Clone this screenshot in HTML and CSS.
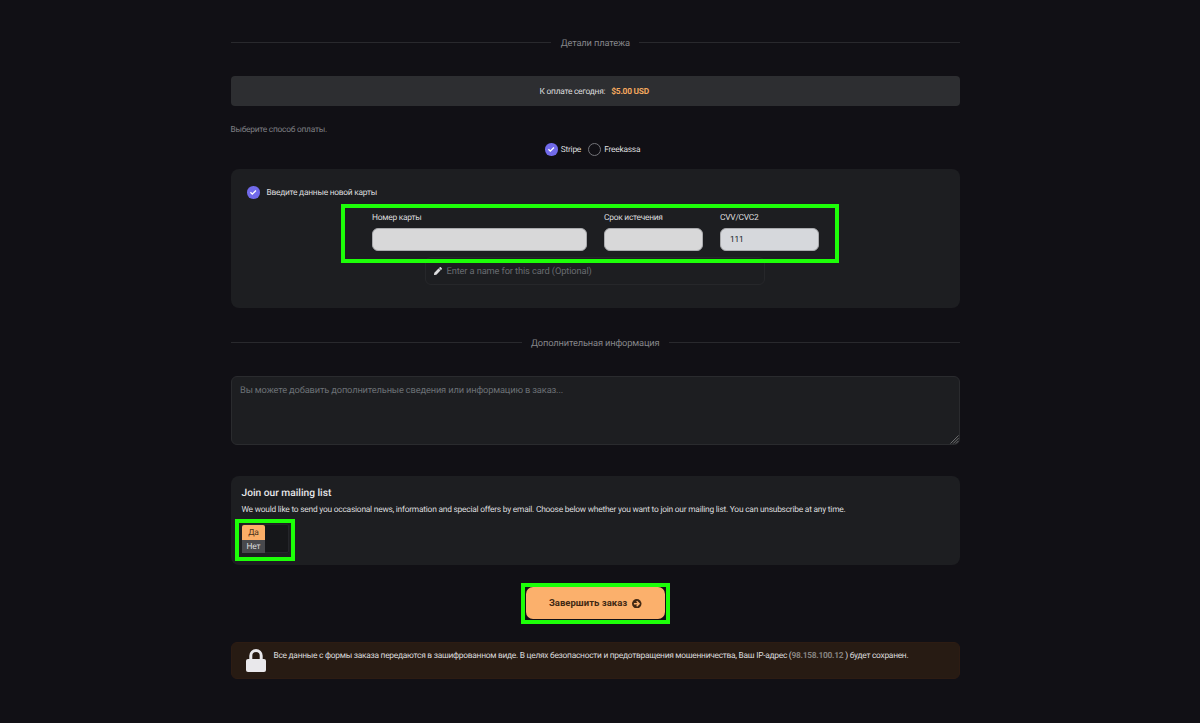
FILE: index.html
```
<!DOCTYPE html>
<html lang="ru">
<head>
<meta charset="utf-8">
<title>Оформление заказа</title>
<link rel="stylesheet" href="styles.css">
</head>
<body>
<main class="checkout">
  <div class="divider"><span class="divider-text">Детали платежа</span></div>

  <div class="total"><span class="total-label">К оплате сегодня:</span><strong class="total-price">$5.00 USD</strong></div>

  <p class="hint"><span class="hint-text">Выберите способ оплаты.</span></p>

  <div class="methods">
    <span class="radio radio-on"><svg viewBox="0 0 12 12"><path d="M3.3 6.1l1.8 1.7 3.5-3.5"/></svg></span>
    <span class="method-name stripe">Stripe</span>
    <span class="radio"></span>
    <span class="method-name freekassa">Freekassa</span>
  </div>

  <section class="card-panel">
    <div class="card-choice">
      <span class="radio radio-on"><svg viewBox="0 0 12 12"><path d="M3.3 6.1l1.8 1.7 3.5-3.5"/></svg></span>
      <span class="choice-text">Введите данные новой карты</span>
    </div>
    <div class="fields">
      <div class="field"><span class="field-label number-label">Номер карты</span><div class="field-box"></div></div>
      <div class="field"><span class="field-label expiry-label">Срок истечения</span><div class="field-box"></div></div>
      <div class="field"><span class="field-label cvv-label">CVV/CVC2</span><div class="field-box field-box-filled">111</div></div>
    </div>
    <div class="card-name">
      <svg class="pencil" viewBox="0 0 512 512"><path d="M498 142l-46 46c-5 5-13 5-17 0L324 77c-5-5-5-12 0-17l46-46c19-19 49-19 68 0l60 60c19 19 19 49 0 68zm-214-42L22 362 0 484c-3 16 12 30 28 28l122-22 262-262c5-5 5-13 0-17L301 100c-4-5-12-5-17 0z"/></svg>
      <span class="card-name-text">Enter a name for this card (Optional)</span>
    </div>
    <div class="mark mark-card"></div>
  </section>

  <div class="divider divider-info"><span class="divider-text info-text">Дополнительная информация</span></div>

  <div class="notes">
    <span class="notes-text">Вы можете добавить дополнительные сведения или информацию в заказ...</span>
    <svg class="grip" viewBox="0 0 10 10"><path d="M0.5 9.5l9-9M3.5 9.5l6-6M6.5 9.5l3-3"/></svg>
  </div>

  <section class="mailing">
    <h2 class="mailing-title"><span class="mailing-title-text">Join our mailing list</span></h2>
    <p class="mailing-copy"><span class="mailing-copy-text">We would like to send you occasional news, information and special offers by email. Choose below whether you want to join our mailing list. You can unsubscribe at any time.</span></p>
    <div class="switch">
      <span class="switch-yes">Да</span>
      <span class="switch-no">Нет</span>
    </div>
    <div class="mark mark-switch"></div>
  </section>

  <div class="submit-row">
    <div class="submit-frame">
      <button class="submit" type="button"><span class="submit-text">Завершить заказ</span><svg class="arrow" viewBox="0 0 10 10"><circle cx="5" cy="5" r="5"/><path d="M2 5h5.4M4.9 2.3L7.6 5 4.9 7.7"/></svg></button>
    </div>
  </div>

  <div class="secure">
    <svg class="lock" viewBox="0 0 20 23"><path class="shackle" d="M4.8 11V6.8a5.2 5.2 0 0 1 10.4 0V11"/><rect y="10" width="20" height="13" rx="2"/></svg>
    <span class="secure-text">Все данные с формы заказа передаются в зашифрованном виде. В целях безопасности и предотвращения мошенничества, Ваш IP-адрес (<strong>98.158.100.12</strong> ) будет сохранен.</span>
  </div>
</main>
</body>
</html>
```
FILE: styles.css
```
* { box-sizing: border-box; }
body {
  margin: 0;
  height: 723px;
  overflow: hidden;
  background: #111015;
  color: #dcdcde;
  font: 8.4px/12px Roboto, "Liberation Sans", sans-serif;
  letter-spacing: -0.245px;
  text-rendering: geometricPrecision;
}
p, h2 { margin: 0; }
span, strong { white-space: nowrap; }
svg { display: block; flex: none; }
.checkout {
  width: 729.5px;
  margin-left: 230.5px;
  padding-top: 36px;
}
.divider {
  display: flex;
  align-items: center;
  gap: 9.5px;
  height: 13px;
  color: #85868a;
  font-size: 9.3px;
  letter-spacing: -0.15px;
}
.divider::before, .divider::after {
  content: "";
  flex: 1;
  height: 1px;
  background: #29292d;
}
.divider-text { padding-top: 3px; }
.total {
  display: flex;
  align-items: center;
  justify-content: center;
  gap: 6px;
  height: 30px;
  margin-top: 27px;
  padding: 1px 2px 0 0;
  border-radius: 4px;
  background: #2d2e31;
}
.total-price { color: #f3a75e; }
.hint {
  margin-top: 17.5px;
  color: #7e7f83;
}
.methods {
  display: flex;
  align-items: center;
  height: 13px;
  margin-top: 7.5px;
  padding-left: 314.8px;
}
.radio {
  display: flex;
  flex: none;
  width: 13px;
  height: 13px;
  border: 1px solid #737378;
  border-radius: 50%;
}
.radio-on {
  width: 12.5px;
  height: 12.5px;
  border: 0;
  background: #716aea;
}
.radio svg {
  width: 100%;
  height: 100%;
  fill: none;
  stroke: #fff;
  stroke-width: 1.3;
}
.method-name { margin-left: 3px; }
.stripe { width: 20.5px; margin-right: 7px; }
.card-panel {
  position: relative;
  height: 139px;
  margin-top: 12.5px;
  padding-top: 17.5px;
  border-radius: 8px;
  background: #1d1e21;
}
.card-choice {
  display: flex;
  align-items: center;
  height: 13px;
  gap: 7px;
  padding-left: 16.5px;
}
.fields {
  display: grid;
  grid-template-columns: 215px 99px 98.5px;
  gap: 17px;
  margin: 12.5px 0 0 141.5px;
}
.field-label {
  display: block;
  width: max-content;
}
.field-box {
  height: 23px;
  margin-top: 4px;
  border: 1px solid #a9aaad;
  border-radius: 6px;
  background: #d8d8d9;
}
.field-box-filled {
  padding-left: 9px;
  background: #d6d8dc;
  color: #1c262c;
  line-height: 22px;
}
.card-name {
  display: flex;
  align-items: center;
  gap: 5px;
  width: 340px;
  height: 28px;
  margin: 6px 0 0 194.5px;
  padding-left: 7.5px;
  border: 1px solid #26272a;
  border-radius: 6px;
  color: #686b70;
  font-size: 9.3px;
  letter-spacing: -0.13px;
}
.card-name-text { padding-top: 3px; }
.pencil {
  width: 8px;
  height: 8px;
  fill: #dddddf;
}
.mark {
  position: absolute;
  border: 4px solid #1dff08;
}
.mark-card { left: 110.5px; top: 35.5px; width: 498px; height: 59px; }
.divider-info { margin-top: 28.5px; }
.divider-info::before, .divider-info::after { margin-top: -1px; }
.notes {
  position: relative;
  height: 68.5px;
  margin-top: 27px;
  padding: 8px 8.5px;
  border: 1px solid #2a2b2e;
  border-radius: 6px;
  background: #1d1e21;
  color: #6b7075;
  font-size: 9.3px;
  letter-spacing: -0.157px;
}
.grip {
  position: absolute;
  right: 0;
  bottom: 0;
  width: 9px;
  height: 9px;
  fill: none;
  stroke: #8b8b8d;
  stroke-width: 0.8;
}
.mailing {
  position: relative;
  height: 89.5px;
  margin-top: 31px;
  padding: 11px 11px;
  border-radius: 8px;
  background: #1d1e21;
}
.mailing-title {
  color: #e8e8ea;
  font-size: 10.2px;
  font-weight: 500;
  letter-spacing: 0;
  line-height: 14px;
}
.mailing-copy {
  margin-top: 3px;
  letter-spacing: -0.228px;
}
.switch {
  width: 47.5px;
  height: 29px;
  margin-top: 8.5px;
  border: 1px solid #24252a;
  border-radius: 2px;
  background: #16171a;
}
.switch span {
  display: block;
  width: 23px;
  height: 14px;
  margin-left: -0.5px;
  text-align: center;
  line-height: 16px;
  letter-spacing: -0.1px;
}
.switch .switch-yes {
  height: 15px;
  border-radius: 2px 2px 0 0;
  background: #fbae67;
  color: #49301b;
}
.switch .switch-no {
  height: 13px;
  line-height: 15px;
  background: #48494d;
}
.mark-switch { left: 4.5px; top: 43.5px; width: 60px; height: 42px; }
.submit-row {
  display: flex;
  justify-content: center;
  margin-top: 18px;
}
.submit-frame {
  width: 149px;
  height: 41px;
  border: 4px solid #1dff08;
}
.submit {
  display: flex;
  align-items: center;
  justify-content: center;
  gap: 5px;
  width: 139.5px;
  height: 32px;
  margin: 0.3px 0 0 0.8px;
  padding: 0;
  border: 0;
  border-radius: 7px;
  background: #fbb06c;
  color: #412813;
  font: 700 9.5px/12px Roboto, "Liberation Sans", sans-serif;
  letter-spacing: 0.03px;
}
.arrow { width: 9.5px; height: 9.5px; fill: #412813; }
.arrow path { fill: none; stroke: #fbb06c; stroke-width: 1.4; }
.secure {
  display: flex;
  align-items: flex-start;
  gap: 7.5px;
  height: 37.5px;
  margin-top: 17.5px;
  padding: 7px 15.5px;
  border: 1px solid #2d1c13;
  border-radius: 6px;
  background: #271b13;
  letter-spacing: -0.265px;
}
.lock { width: 20px; height: 23px; margin: -0.8px 0 0 -1px; fill: #e9e8eb; }
.shackle { fill: none; stroke: #e9e8eb; stroke-width: 3; }
.secure strong { color: #85827f; }
```
